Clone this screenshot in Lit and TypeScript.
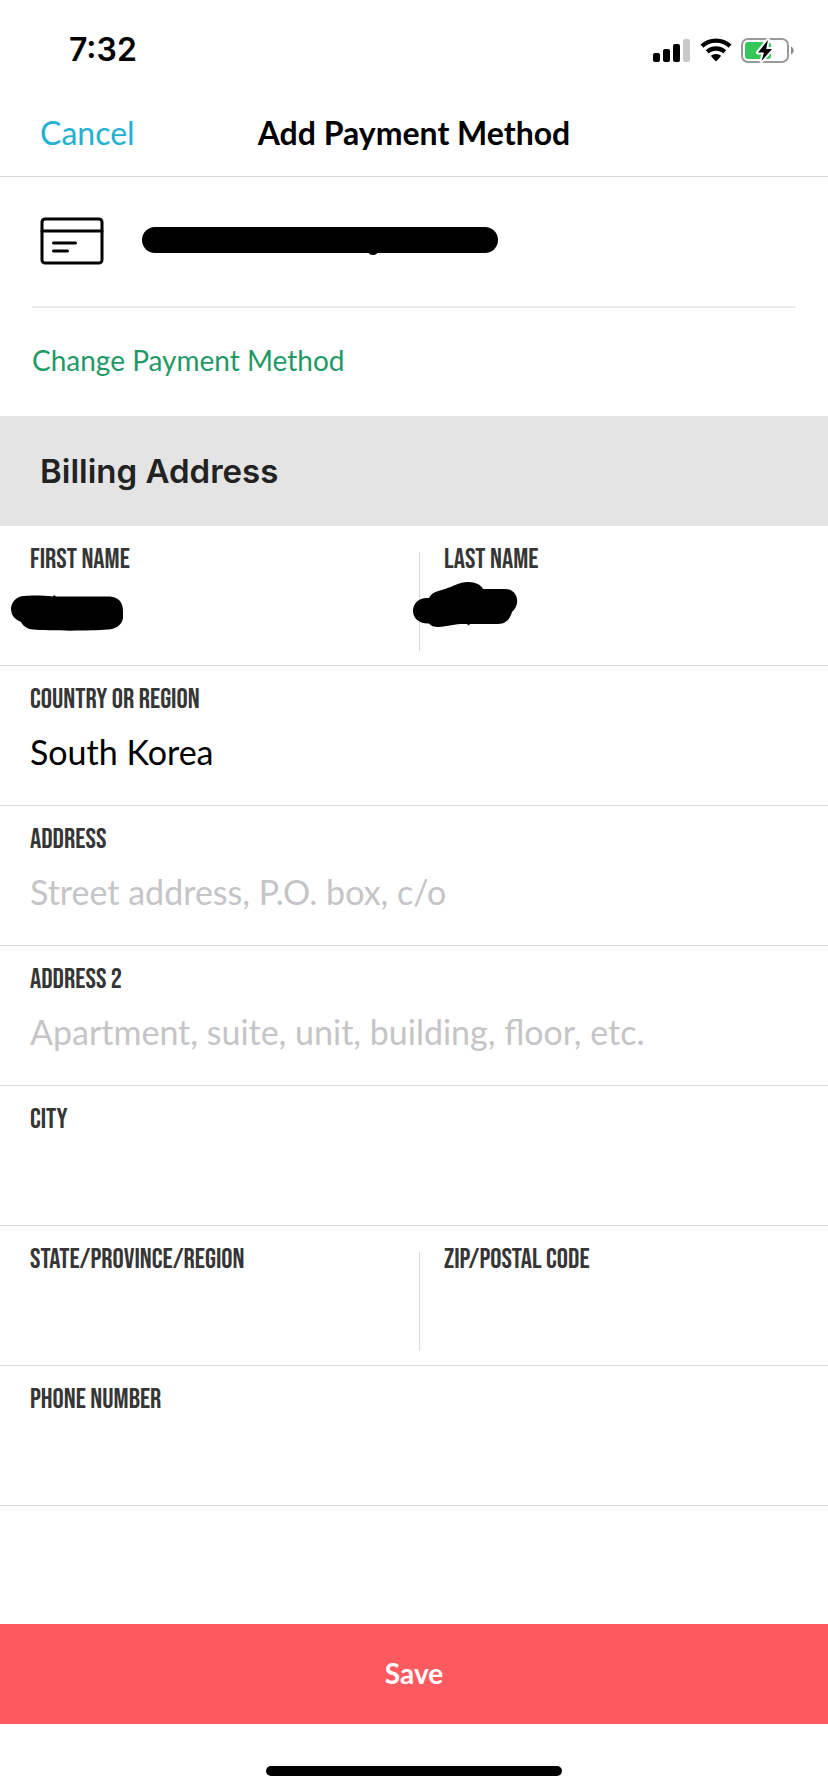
import { LitElement, html, css, svg } from "lit";
import { customElement } from "lit/decorators.js";

const signalIcon = svg`
  <svg class="signal" viewBox="0 0 38 24" aria-hidden="true">
    <rect x="0" y="15" width="7" height="9" rx="2" />
    <rect x="10" y="11" width="7" height="13" rx="2" />
    <rect x="20" y="6" width="7" height="18" rx="2" />
    <rect x="30" y="1" width="7" height="23" rx="2" fill="#c9c9c9" />
  </svg>`;

const wifiIcon = svg`
  <svg class="wifi" viewBox="0 0 32 24" aria-hidden="true">
    <path d="M16 0.5C22 0.5 27.4 2.7 31.5 6.6L28.6 9.7C25.3 6.6 20.9 4.8 16 4.8S6.7 6.6 3.4 9.7L0.5 6.6C4.6 2.7 10 .5 16 .5Z" />
    <path d="M16 8.3C19.9 8.3 23.500 9.8 26.200 12.200L23.200 15.400C21.300 13.700 18.800 12.700 16 12.700S10.700 13.700 8.800 15.400L5.800 12.200C8.500 9.800 12.100 8.300 16 8.300Z" />
    <path d="M16 16C18 16 19.700 16.700 21 17.800C21 18.300 16.700 23.200 16 23.200S11 18.300 11 17.800C12.300 16.700 14 16 16 16Z" />
  </svg>`;

const batteryIcon = svg`
  <svg class="battery" viewBox="0 0 54 28" aria-hidden="true">
    <rect x="1" y="3" width="46" height="23" rx="6" fill="#fff" stroke="#9a9a9a" stroke-width="2" />
    <path d="M50 10.500C53.500 12 53.500 17 50 18.500Z" fill="#8c8c8c" />
    <rect x="4" y="6" width="26" height="17" rx="3" fill="#35c759" />
    <path d="M27 4L17 16.500H23L20.500 25L31 13H25.200Z" fill="#000" stroke="#fff" stroke-width="4" stroke-linejoin="round" paint-order="stroke" />
  </svg>`;

const cardIcon = svg`
  <svg class="card-icon" viewBox="0 0 64 48" fill="none" stroke="#000" stroke-linecap="round" aria-hidden="true">
    <rect x="2" y="2" width="60" height="44" rx="3" stroke-width="3" />
    <path d="M2 14H62" stroke-width="3" />
    <path d="M13.500 26H35.500M13.500 34H27.500" stroke-width="3" />
  </svg>`;

@customElement("app-root")
export class AppRoot extends LitElement {
  static styles = css`
    :host {
      display: flex;
      flex-direction: column;
      min-height: 100vh;
      background: #fff;
      color: #000;
      font-family: "Proxima Nova", Lato, sans-serif;
    }
    * {
      box-sizing: border-box;
    }
    svg {
      display: block;
    }
    button {
      border: 0;
      padding: 0;
      background: none;
      font: inherit;
      color: inherit;
      cursor: pointer;
    }
    .status {
      display: flex;
      align-items: center;
      justify-content: space-between;
      height: 100px;
      padding: 0 33px 0 69px;
    }
    .time {
      font: 600 32px/40px Inter, sans-serif;
    }
    .status-icons {
      display: flex;
      align-items: center;
      gap: 9px;
    }
    .signal {
      width: 38px;
      height: 24px;
    }
    .wifi {
      width: 32px;
      height: 24px;
    }
    .battery {
      width: 54px;
      height: 28px;
    }
    .nav {
      display: grid;
      grid-template-columns: 1fr auto 1fr;
      align-items: center;
      height: 77px;
      padding: 0 40px 10px;
      border-bottom: 1px solid #d9d9d9;
      font-size: 32px;
      line-height: 40px;
    }
    .cancel {
      justify-self: start;
      color: #22b1d3;
    }
    .title {
      margin: 0;
      font-size: 32px;
      font-weight: 700;
    }
    .payment {
      padding: 0 32px;
    }
    .card {
      display: flex;
      align-items: center;
      gap: 37px;
      height: 131px;
      padding: 0 8px 2px;
      border-bottom: 2px solid #ececec;
    }
    .card-icon {
      width: 64px;
      height: 48px;
      flex: none;
    }
    .card-number {
      width: 358px;
      height: 30px;
    }
    .change {
      display: block;
      height: 108px;
      padding-bottom: 4px;
      font-size: 28px;
      line-height: 40px;
      color: #1f9a66;
    }
    .section {
      margin: 0;
      padding: 35px 40px;
      background: #e4e4e4;
      color: #222;
      font: 600 33px/40px Inter, sans-serif;
    }
    .row {
      display: grid;
      grid-auto-columns: 1fr;
      grid-auto-flow: column;
      height: 140px;
      padding: 0 20px 0 30px;
      border-bottom: 1px solid #d9d9d9;
    }
    .field {
      position: relative;
      display: flex;
      flex-direction: column;
      gap: 18px;
      padding-top: 20px;
    }
    .split {
      margin: 26px 0 14px;
      padding-top: 0;
      padding-left: 24px;
      border-left: 1px solid #d9d9d9;
    }
    .split .label {
      margin-top: -6px;
    }
    .label {
      color: #363636;
      font: 400 28px/28px "Bebas Neue", "Liberation Sans", sans-serif;
      text-transform: uppercase;
    }
    .control {
      width: 100%;
      height: 40px;
      margin: 0;
      padding: 0;
      border: 0;
      outline: 0;
      border-radius: 0;
      background: none;
      color: #000;
      font: 400 34px/40px "Proxima Nova", Lato, sans-serif;
      appearance: none;
    }
    .control::placeholder {
      color: #c5c5c7;
      opacity: 1;
    }
    .scribble {
      position: absolute;
      overflow: visible;
      pointer-events: none;
    }
    .scribble-first {
      left: -20px;
      top: 68px;
      width: 114px;
      height: 38px;
    }
    .scribble-last {
      left: -8px;
      top: 29px;
      width: 106px;
      height: 47px;
    }
    .save {
      height: 100px;
      margin-top: auto;
      padding-bottom: 2px;
      background: #ff5a60;
      color: #fff;
      font-size: 28px;
      font-weight: 700;
      line-height: 40px;
    }
    .home {
      display: flex;
      justify-content: center;
      height: 68px;
      padding-top: 42px;
    }
    .home-bar {
      width: 296px;
      height: 10px;
      border-radius: 5px;
      background: #000;
    }
  `;

  private input(id: string, placeholder = "") {
    return html`<input class="control" id=${id} type="text" placeholder=${placeholder} />`;
  }

  render() {
    return html`
      <div class="status">
        <span class="time">7:32</span>
        <div class="status-icons">${signalIcon}${wifiIcon}${batteryIcon}</div>
      </div>
      <header class="nav">
        <button class="cancel" type="button">Cancel</button>
        <h1 class="title">Add Payment Method</h1>
      </header>
      <section class="payment">
        <div class="card">
          ${cardIcon}
          <svg class="card-number" viewBox="0 0 358 30" aria-hidden="true">
            <rect x="1" y="1" width="356" height="26" rx="13" />
            <circle cx="232" cy="23.500" r="5.500" />
          </svg>
        </div>
        <button class="change" type="button">Change Payment Method</button>
      </section>
      <h2 class="section">Billing Address</h2>
      <div class="row">
        <div class="field">
          <label class="label" for="first">First name</label>
          ${this.input("first")}
          <svg class="scribble scribble-first" viewBox="0 0 114 38" aria-hidden="true">
            <path d="M14 2C22 1 34 1.500 43 2.500L44 1L46 2.500L100 2.500C108 3 113 8 113 17V24C112 31 106 35 98 35.500C80 37 40 37 23 35.500C17 35 13 32 11 28C4 25 1 21 1 14C2 7 7 2.500 14 2Z" />
          </svg>
        </div>
        <div class="field split">
          <label class="label" for="last">Last name</label>
          ${this.input("last")}
          <svg class="scribble scribble-last" viewBox="0 0 106 47" aria-hidden="true">
            <path d="M17 17C20 11 26 10 33 8C42 5 47 1 56 1C64 1 69 4 71 8H93C101 8 106 14 105 22C104 27 102 29 100 31C98 38 94 43 86 43H58L56.500 44.500L55 43C44 42.500 37 45 26 46C22 46 19 45 17 42.500C7 43 1 37 1 30C1 22 7 16 17 17Z" />
          </svg>
        </div>
      </div>
      <div class="row">
        <div class="field">
          <label class="label" for="country">Country or region</label>
          <select class="control" id="country">
            <option selected>South Korea</option>
          </select>
        </div>
      </div>
      <div class="row">
        <div class="field">
          <label class="label" for="address">Address</label>
          ${this.input("address", "Street address, P.O. box, c/o")}
        </div>
      </div>
      <div class="row">
        <div class="field">
          <label class="label" for="address2">Address 2</label>
          ${this.input("address2", "Apartment, suite, unit, building, floor, etc.")}
        </div>
      </div>
      <div class="row">
        <div class="field">
          <label class="label" for="city">City</label>
          ${this.input("city")}
        </div>
      </div>
      <div class="row">
        <div class="field">
          <label class="label" for="state">State/Province/Region</label>
          ${this.input("state")}
        </div>
        <div class="field split">
          <label class="label" for="zip">Zip/Postal code</label>
          ${this.input("zip")}
        </div>
      </div>
      <div class="row">
        <div class="field">
          <label class="label" for="phone">Phone number</label>
          ${this.input("phone")}
        </div>
      </div>
      <button class="save" type="button">Save</button>
      <div class="home"><div class="home-bar"></div></div>
    `;
  }
}
